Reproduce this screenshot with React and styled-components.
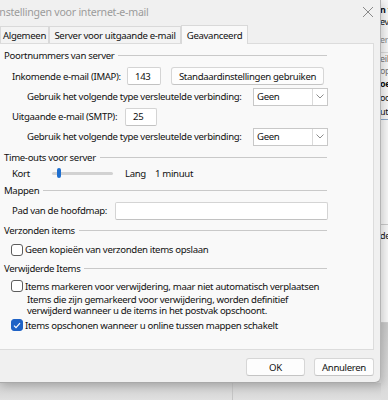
import React from 'react';
import styled, { createGlobalStyle } from 'styled-components';

const Global = createGlobalStyle`
  html, body { margin: 0; padding: 0; }
  body {
    width: 388px; height: 400px; overflow: hidden;
    background: #dcdcdc;
    font-family: "Noto Sans", "Open Sans", sans-serif;
    font-size: 9.6px;
    letter-spacing: -0.33px;
    color: #111111;
  }
`;

const Page = styled.div`
  display: flex;
  width: 388px;
  height: 400px;
`;

const LeftCol = styled.div`
  width: 381px;
  display: flex;
  flex-direction: column;
`;

const Dialog = styled.div`
  height: 383px;
  box-sizing: border-box;
  background: #f0f0f0;
  border-right: 1px solid #b4b4b4;
  border-bottom: 1px solid #a9a9a9;
  border-bottom-right-radius: 6px;
  display: flex;
  flex-direction: column;
  position: relative;
  z-index: 1;
  box-shadow: 2px 3px 8px rgba(0,0,0,0.18);
`;

const TitleBar = styled.div`
  height: 24px;
  display: flex;
  align-items: center;
  justify-content: space-between;
  padding-right: 6px;
`;

const Title = styled.div`
  margin-left: -4px;
  font-size: 10.6px;
  letter-spacing: -0.25px;
  color: #9b9b9b;
  white-space: nowrap;
`;

const TabRow = styled.div`
  height: 19px;
  display: flex;
  align-items: flex-end;
`;

const Tab = styled.div`
  box-sizing: border-box;
  width: ${p => p.$w}px;
  height: ${p => (p.$active ? 19 : 17)}px;
  display: flex;
  align-items: center;
  justify-content: center;
  white-space: nowrap;
  background: ${p => (p.$active ? '#f9f9f9' : '#f3f3f3')};
  border: 1px solid #d9d9d9;
  border-bottom: none;
  margin-bottom: ${p => (p.$active ? '-1px' : '0')};
  position: relative;
  z-index: ${p => (p.$active ? 2 : 0)};
`;

const Panel = styled.div`
  box-sizing: border-box;
  height: 307px;
  margin-left: -1px;
  width: 375px;
  background: #f9f9f9;
  border: 1px solid #dcdcdc;
  display: flex;
  flex-direction: column;
  padding-left: 4px;
`;

const Row = styled.div`
  height: ${p => p.$h}px;
  display: flex;
  align-items: center;
  padding-left: ${p => p.$indent || 0}px;
  white-space: nowrap;
`;

const Header = styled.div`
  width: 323px;
  height: ${p => p.$h}px;
  display: flex;
  align-items: center;
  white-space: nowrap;
  &::after {
    content: '';
    flex: 1;
    height: 1px;
    background: #c9c9c9;
    margin-left: 4px;
  }
`;

const Label = styled.span`
  display: inline-block;
  width: ${p => (p.$w ? `${p.$w}px` : 'auto')};
`;

const TextBox = styled.div`
  box-sizing: border-box;
  width: ${p => p.$w}px;
  height: 18px;
  background: #ffffff;
  border: 1px solid #d4d4d4;
  border-bottom-color: #c2c2c2;
  border-radius: 2px;
  display: flex;
  align-items: center;
  padding-left: 7px;
`;

const Button = styled.div`
  box-sizing: border-box;
  width: ${p => p.$w}px;
  height: ${p => p.$h || 18}px;
  margin-left: ${p => p.$ml || 0}px;
  background: #fdfdfd;
  border: 1px solid #d6d6d6;
  border-bottom-color: #c4c4c4;
  border-radius: 3px;
  display: flex;
  align-items: center;
  justify-content: center;
  white-space: nowrap;
`;

const Select = styled.div`
  box-sizing: border-box;
  width: 75px;
  height: 18px;
  background: #ffffff;
  border: 1px solid #c8c8c8;
  display: flex;
  align-items: stretch;
`;

const SelectValue = styled.div`
  flex: 1;
  display: flex;
  align-items: center;
  padding-left: 3px;
`;

const SelectArrow = styled.div`
  width: 14px;
  border-left: 1px solid #dadada;
  display: flex;
  align-items: center;
  justify-content: center;
`;

const SliderTrack = styled.div`
  width: 61px;
  height: 3px;
  border-radius: 2px;
  background: #d2d2d2;
  margin-left: 12px;
  margin-right: 12px;
  position: relative;
`;

const SliderThumb = styled.div`
  position: absolute;
  left: 5px;
  top: -4px;
  width: 4px;
  height: 10px;
  border-radius: 2px;
  background: #1f6fcf;
`;

const Check = styled.div`
  box-sizing: border-box;
  width: 12px;
  height: 12px;
  margin-left: 7px;
  margin-right: 2px;
  border-radius: 3px;
  border: 1px solid ${p => (p.$checked ? '#1f63c6' : '#5d5d5d')};
  background: ${p => (p.$checked ? '#1f63c6' : '#ffffff')};
  display: flex;
  align-items: center;
  justify-content: center;
`;

const Desc = styled.div`
  height: 22px;
  box-sizing: border-box;
  padding-left: 23px;
  line-height: 11px;
  white-space: nowrap;
`;

const Footer = styled.div`
  flex: 1;
  display: flex;
  justify-content: flex-end;
  align-items: flex-start;
  padding-top: 8px;
  padding-right: 6px;
  gap: 9px;
`;

const Shadow = styled.div`
  flex: 1;
  display: flex;
  background: linear-gradient(#cdcdcd, #e0e0e0);
`;

const ShadowLeft = styled.div`
  width: 232px;
  border-right: 1px solid #c4c4c4;
`;

const Strip = styled.div`
  width: 7px;
  display: flex;
  flex-direction: column;
  overflow: hidden;
`;

const StripTop = styled.div`
  height: 323px;
  background: #f6f6f6;
  border-bottom: 1px solid #cfcfcf;
  display: flex;
  flex-direction: column;
  padding-top: 4px;
  box-sizing: border-box;
`;

const StripText = styled.div`
  height: ${p => p.$h}px;
  line-height: 10px;
  display: flex;
  align-items: center;
  white-space: nowrap;
  font-size: 9px;
  font-weight: ${p => (p.$bold ? 700 : 400)};
  color: ${p => p.$c || '#111'};
  border-bottom: ${p => (p.$line ? `1px solid ${p.$line}` : 'none')};
  margin-left: -1px;
`;

const StripBottom = styled.div`
  flex: 1;
  background: linear-gradient(#c9c9c9, #dedede);
`;

function CloseIcon() {
  return (
    <svg width="12" height="12" viewBox="0 0 12 12">
      <path d="M1 1 L11 11 M11 1 L1 11" stroke="#8a8a8a" strokeWidth="1" fill="none" />
    </svg>
  );
}

function Chevron() {
  return (
    <svg width="8" height="5" viewBox="0 0 8 5">
      <path d="M0.5 0.5 L4 4 L7.5 0.5" stroke="#8c8c8c" strokeWidth="1" fill="none" />
    </svg>
  );
}

function Tick() {
  return (
    <svg width="8" height="7" viewBox="0 0 8 7">
      <path d="M1 3.6 L3 5.6 L7 1.2" stroke="#ffffff" strokeWidth="1.2" fill="none" />
    </svg>
  );
}

export default function App() {
  return (
    <>
      <Global />
      <Page>
        <LeftCol>
          <Dialog>
            <TitleBar>
              <Title>Instellingen voor internet-e-mail</Title>
              <CloseIcon />
            </TitleBar>
            <TabRow>
              <Tab $w={49}>Algemeen</Tab>
              <Tab $w={132}>Server voor uitgaande e-mail</Tab>
              <Tab $w={67} $active>Geavanceerd</Tab>
            </TabRow>
            <Panel>
              <Header $h={22}>Poortnummers van server</Header>
              <Row $h={20} $indent={8}>
                <Label $w={115}>Inkomende e-mail (IMAP):</Label>
                <TextBox $w={34}>143</TextBox>
                <Button $w={153} $ml={10}>Standaardinstellingen gebruiken</Button>
              </Row>
              <Row $h={21} $indent={23}>
                <Label $w={226}>Gebruik het volgende type versleutelde verbinding:</Label>
                <Select>
                  <SelectValue>Geen</SelectValue>
                  <SelectArrow><Chevron /></SelectArrow>
                </Select>
              </Row>
              <Row $h={19} $indent={8}>
                <Label $w={113}>Uitgaande e-mail (SMTP):</Label>
                <TextBox $w={32}>25</TextBox>
              </Row>
              <Row $h={21} $indent={23}>
                <Label $w={226}>Gebruik het volgende type versleutelde verbinding:</Label>
                <Select>
                  <SelectValue>Geen</SelectValue>
                  <SelectArrow><Chevron /></SelectArrow>
                </Select>
              </Row>
              <Header $h={20}>Time-outs voor server</Header>
              <Row $h={13} $indent={8}>
                <Label $w={28}>Kort</Label>
                <SliderTrack><SliderThumb /></SliderTrack>
                <Label $w={30}>Lang</Label>
                <Label>1 minuut</Label>
              </Row>
              <Header $h={21}>Mappen</Header>
              <Row $h={19} $indent={8}>
                <Label $w={103}>Pad van de hoofdmap:</Label>
                <TextBox $w={213} />
              </Row>
              <Header $h={21}>Verzonden items</Header>
              <Row $h={17}>
                <Check />
                <Label>Geen kopieën van verzonden items opslaan</Label>
              </Row>
              <Header $h={20}>Verwijderde Items</Header>
              <Row $h={16}>
                <Check />
                <Label>Items markeren voor verwijdering, maar niet automatisch verplaatsen</Label>
              </Row>
              <Desc>
                Items die zijn gemarkeerd voor verwijdering, worden definitief<br />
                verwijderd wanneer u de items in het postvak opschoont.
              </Desc>
              <Row $h={18}>
                <Check $checked><Tick /></Check>
                <Label>Items opschonen wanneer u online tussen mappen schakelt</Label>
              </Row>
            </Panel>
            <Footer>
              <Button $w={59} $h={18}>OK</Button>
              <Button $w={60} $h={18}>Annuleren</Button>
            </Footer>
          </Dialog>
          <Shadow>
            <ShadowLeft />
          </Shadow>
        </LeftCol>
        <Strip>
          <StripTop>
            <StripText $h={12} $bold>n t</StripText>
            <StripText $h={12}>ev</StripText>
            <StripText $h={24} $c="#888" $line="#d8d8d8">er</StripText>
            <StripText $h={12} $c="#777">eil</StripText>
            <StripText $h={12} $c="#777">op</StripText>
            <StripText $h={14} $bold>oe</StripText>
            <StripText $h={14}>oo</StripText>
            <StripText $h={14} $line="#8aa6c8">utl</StripText>
            <StripText $h={104} $line="#c9c9c9"> </StripText>
            <StripText $h={22}>de</StripText>
          </StripTop>
          <StripBottom />
        </Strip>
      </Page>
    </>
  );
}
